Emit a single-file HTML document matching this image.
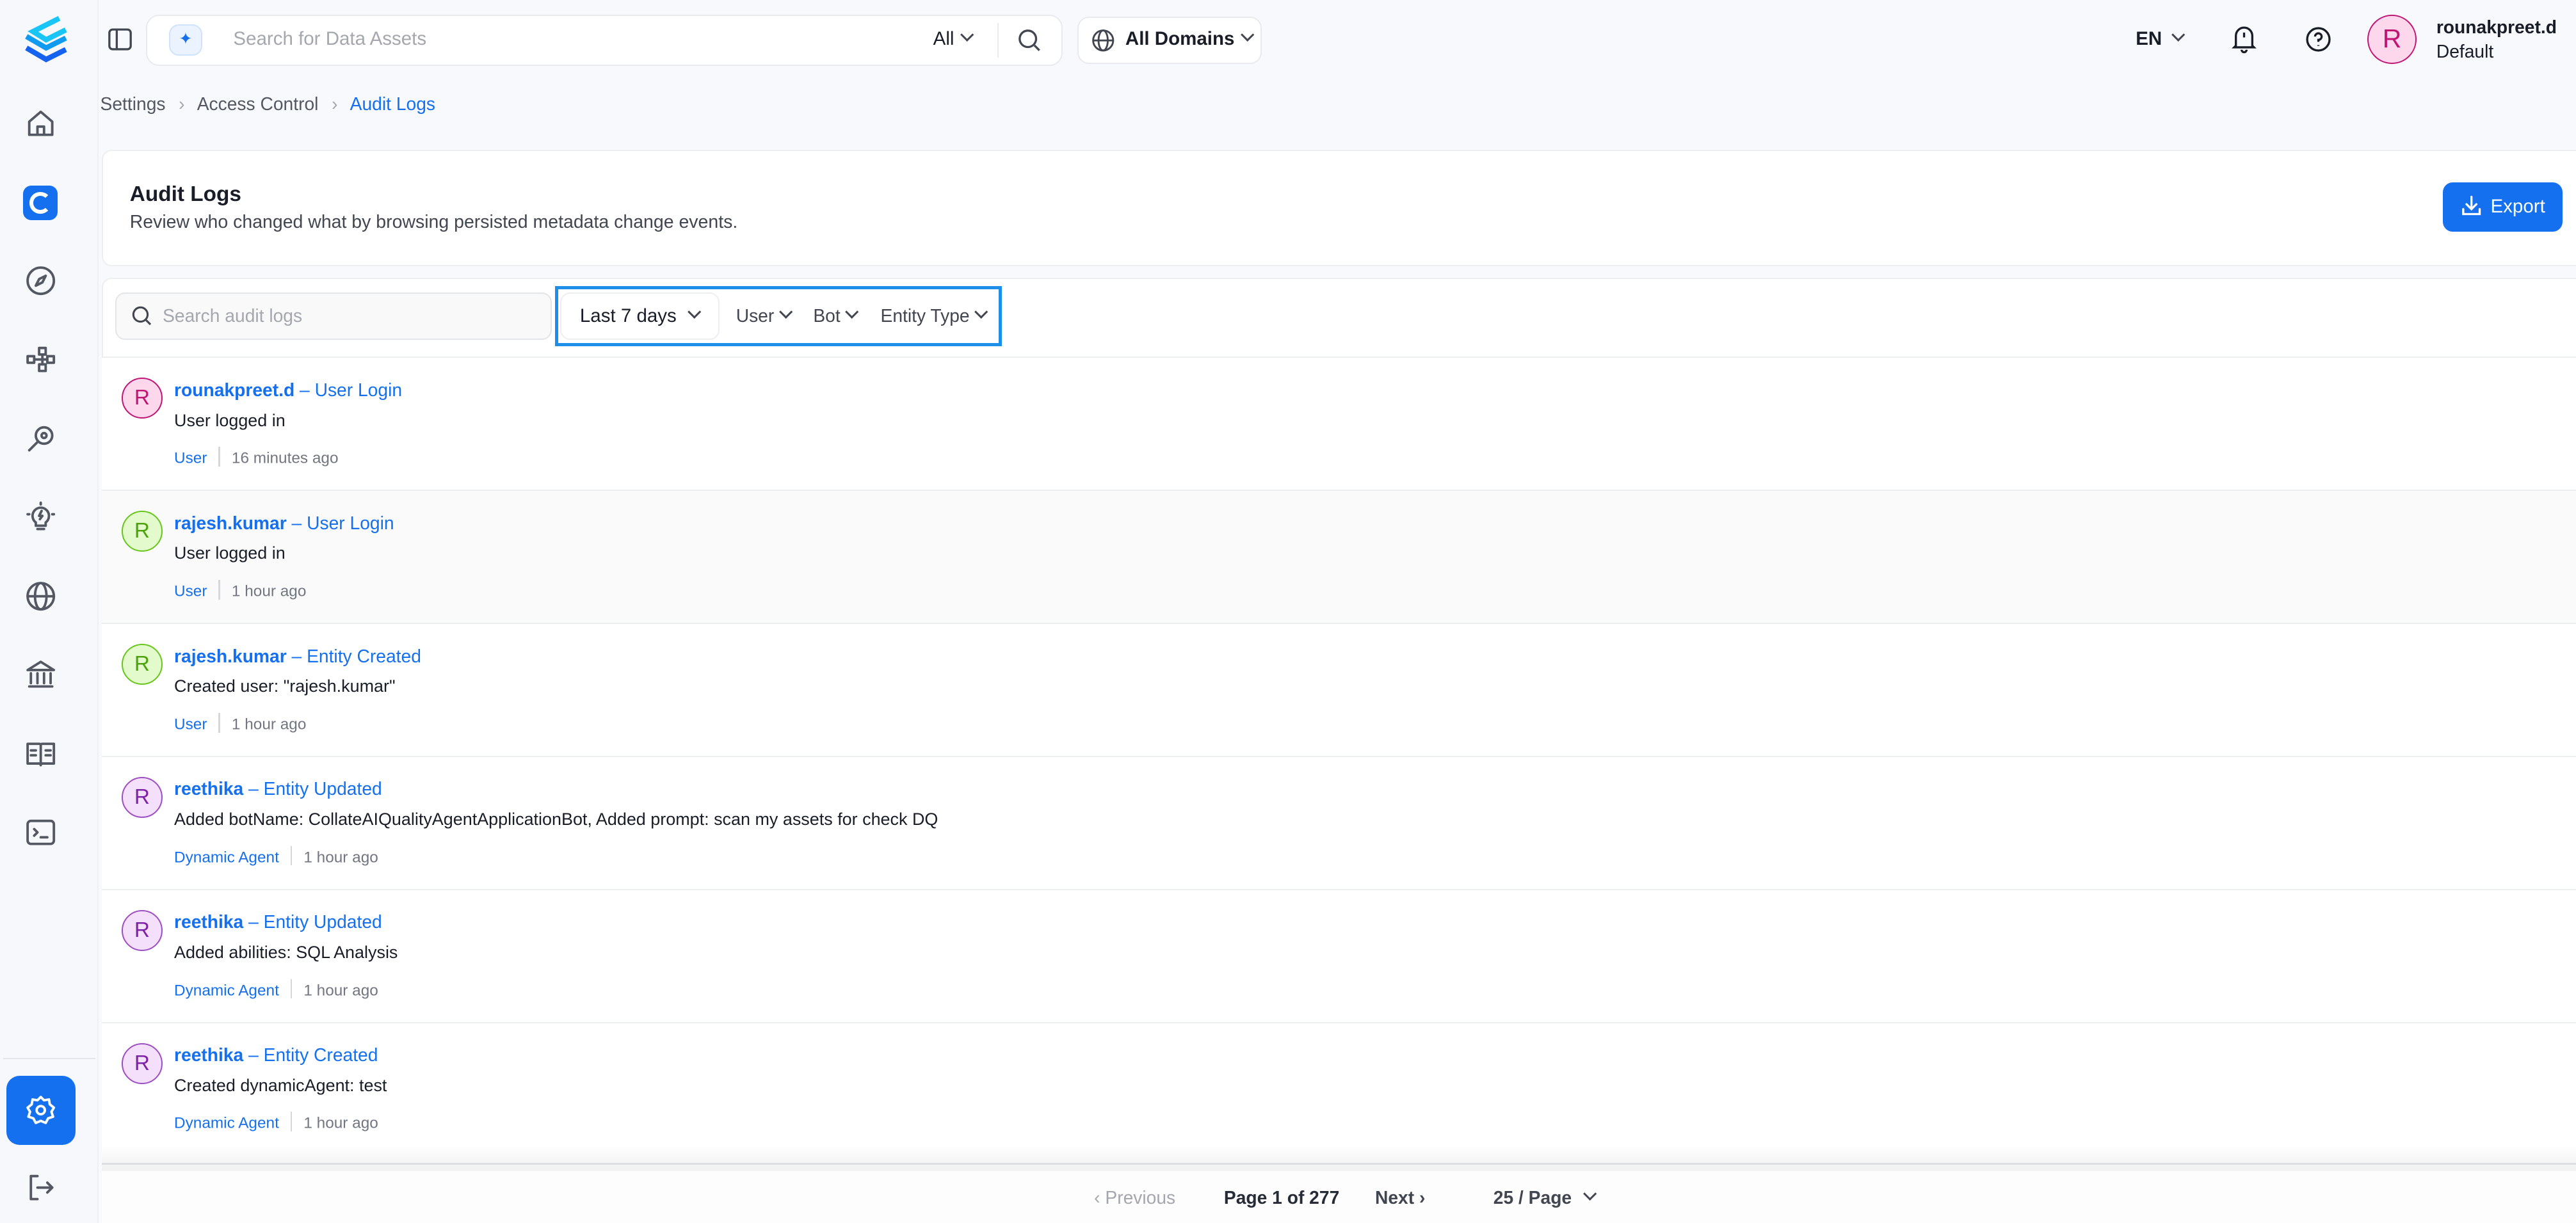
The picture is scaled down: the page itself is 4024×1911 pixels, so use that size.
<!DOCTYPE html>
<html><head><meta charset="utf-8"><style>
*{box-sizing:border-box;margin:0;padding:0}
html,body{width:4024px;height:1911px;overflow:hidden;background:#f8f9fc}
#w{zoom:2.5663;width:1568px;height:745px;position:relative;font-family:"Liberation Sans",sans-serif;color:#181d27;background:#f8f9fc;overflow:hidden}
.a{position:absolute}
.ic{position:absolute;left:15px;width:20px;height:20px;fill:none;stroke:#535862;stroke-width:1.5;stroke-linecap:round;stroke-linejoin:round}
.row{position:absolute;left:62px;width:1506px;height:81px;border-bottom:1px solid #eceef1;background:#fff}
.av{position:absolute;left:12px;top:12px;width:25px;height:25px;border-radius:50%;font-size:13px;text-align:center;line-height:23px}
.t{position:absolute;left:44px;top:13px;font-size:11px;color:#1570ef;font-weight:bold}
.t span{font-weight:normal}
.d{position:absolute;left:44px;top:32px;font-size:10.5px;color:#181d27}
.m{position:absolute;left:44px;top:54px;font-size:9.5px;color:#717680;white-space:nowrap}
.m b{font-weight:normal;color:#1570ef}
.m i{display:inline-block;width:1px;height:12px;background:#d5d7da;margin:0 7px;vertical-align:-2px}
.chev{display:inline-block;width:6px;height:6px;border-right:1.3px solid #414651;border-bottom:1.3px solid #414651;transform:rotate(45deg);margin-left:5px;vertical-align:3px}
</style></head><body><div id="w">
<div class="a" style="left:0;top:0;width:60px;height:745px;background:#f7f8fc;border-right:1px solid #eef0f4"></div>
<svg class="a" style="left:12px;top:8px" width="32" height="34" viewBox="0 0 32 34"><path d="M24 3 L8 11 L16 16 L28 10" fill="none" stroke="#18c5f5" stroke-width="3.2"/><path d="M4 14 L16 21 L28 15" fill="none" stroke="#119bf0" stroke-width="3.2"/><path d="M4 21 L16 28 L28 22" fill="none" stroke="#1562f0" stroke-width="3.2"/></svg>
<svg class="ic" style="top:65px" viewBox="0 0 20 20"><path d="M3 9 L10 3 L17 9 V17 H3 Z"/><path d="M8 17 V12 H12 V17"/></svg>
<div class="a" style="left:14px;top:113px;width:21px;height:21px;border-radius:5px;background:#1570ef"><div class="a" style="left:4px;top:4px;width:13px;height:13px;border:2.4px solid #fff;border-right-color:transparent;border-radius:50%"></div></div>
<svg class="ic" style="top:161px" viewBox="0 0 20 20"><circle cx="10" cy="10" r="8"/><path d="M13 7 L9 9 L7 13 L11 11 Z"/></svg>
<svg class="ic" style="top:209px" viewBox="0 0 20 20"><rect x="2" y="8" width="4" height="4"/><rect x="9" y="3" width="4" height="4"/><rect x="9" y="13" width="4" height="4"/><rect x="14" y="8" width="4" height="4"/><path d="M6 10 H14 M11 7 V13"/></svg>
<svg class="ic" style="top:257px" viewBox="0 0 20 20"><circle cx="12" cy="8" r="5"/><circle cx="12" cy="8" r="1.5"/><path d="M8 12 L3 17"/></svg>
<svg class="ic" style="top:305px" viewBox="0 0 20 20"><path d="M7 13 A5 5 0 1 1 13 13 V15 H7 Z M8 17 H12 M10 1 V2 M3 8 H2 M18 8 H17 M10.5 6 L9 9 H11 L9.5 11"/></svg>
<svg class="ic" style="top:353px" viewBox="0 0 20 20"><circle cx="10" cy="10" r="8"/><ellipse cx="10" cy="10" rx="3.5" ry="8"/><path d="M2 10 H18"/></svg>
<svg class="ic" style="top:401px" viewBox="0 0 20 20"><path d="M2 7 L10 2 L18 7 Z M3 17 H17 M4 9 V15 M8 9 V15 M12 9 V15 M16 9 V15"/></svg>
<svg class="ic" style="top:449px" viewBox="0 0 20 20"><path d="M2 4 H9 Q10 4 10 5 V17 Q10 16 9 16 H2 Z M18 4 H11 Q10 4 10 5 M18 4 V16 H11 Q10 16 10 17 M4 8 H7 M4 11 H7 M13 8 H16 M13 11 H16"/></svg>
<svg class="ic" style="top:497px" viewBox="0 0 20 20"><rect x="2" y="3" width="16" height="14" rx="2"/><path d="M6 8 L8 10 L6 12 M10 13 H14"/></svg>
<div class="a" style="left:2px;top:644px;width:56px;height:1px;background:#e3e5ea"></div>
<div class="a" style="left:4px;top:655px;width:42px;height:42px;border-radius:8px;background:#1570ef"></div>
<svg class="ic" style="top:666px;stroke:#fff" viewBox="0 0 20 20"><circle cx="10" cy="10" r="2.5"/><path d="M10 2 L12 4 L15 3.5 L15.5 6.5 L18 8.5 L16.5 11 L17.5 14 L14.5 15 L13 17.8 L10 16.5 L7 17.8 L5.5 15 L2.5 14 L3.5 11 L2 8.5 L4.5 6.5 L5 3.5 L8 4 Z"/></svg>
<svg class="ic" style="top:713px" viewBox="0 0 20 20"><path d="M8 3 H4 V17 H8 M8 10 H17 M14 7 L17 10 L14 13"/></svg>
<svg class="a" style="left:65px;top:16px" width="16" height="16" viewBox="0 0 16 16" fill="none" stroke="#414651" stroke-width="1.3"><rect x="1.5" y="2" width="13" height="12" rx="2"/><path d="M6 2 V14"/></svg>
<div class="a" style="left:89px;top:9px;width:558px;height:31px;background:#fff;border:1px solid #e9eaf0;border-radius:8px"></div>
<div class="a" style="left:103px;top:15px;width:20px;height:19px;border-radius:6px;background:#eaf3ff;border:1px solid #cfe3fd;color:#1570ef;font-size:10px;text-align:center;line-height:17px">✦</div>
<div class="a" style="left:142px;top:17px;font-size:11.5px;color:#a4a7ae">Search for Data Assets</div>
<div class="a" style="left:568px;top:17px;font-size:11.5px;color:#181d27">All<span class="chev"></span></div>
<div class="a" style="left:607px;top:14px;width:1px;height:21px;background:#e9eaeb"></div>
<svg class="a" style="left:619px;top:17px" width="15" height="15" viewBox="0 0 15 15" fill="none" stroke="#414651" stroke-width="1.3"><circle cx="6.5" cy="6.5" r="5"/><path d="M10.5 10.5 L13.5 13.5"/></svg>
<div class="a" style="left:656px;top:10px;width:112px;height:29px;background:#fff;border:1px solid #e9eaf0;border-radius:7px"></div>
<svg class="a" style="left:664px;top:17px" width="15" height="15" viewBox="0 0 16 16" fill="none" stroke="#414651" stroke-width="1.2"><circle cx="8" cy="8" r="6.5"/><ellipse cx="8" cy="8" rx="3" ry="6.5"/><path d="M1.5 8 H14.5"/></svg>
<div class="a" style="left:685px;top:17px;font-size:11.5px;font-weight:bold;color:#181d27">All Domains<span class="chev"></span></div>
<div class="a" style="left:1300px;top:17px;font-size:11.5px;font-weight:bold;color:#181d27">EN<span class="chev" style="margin-left:7px"></span></div>
<svg class="a" style="left:1358px;top:15px" width="16" height="18" viewBox="0 0 16 18" fill="none" stroke="#181d27" stroke-width="1.3"><path d="M3 13 V7 A5 5 0 0 1 13 7 V13 L14 14 H2 Z M6.5 15.5 A1.5 1.5 0 0 0 9.5 15.5 M8 5 V8"/></svg>
<svg class="a" style="left:1403px;top:16px" width="16" height="16" viewBox="0 0 16 16" fill="none" stroke="#181d27" stroke-width="1.3"><circle cx="8" cy="8" r="6.8"/><path d="M6 6.3 A2 2 0 1 1 8 8.3 V9.5 M8 11.5 V12"/></svg>
<div class="a" style="left:1441px;top:9px;width:30px;height:30px;border-radius:50%;background:#fdd7ec;border:1px solid #c11574;color:#c11574;font-size:16px;text-align:center;line-height:28px">R</div>
<div class="a" style="left:1483px;top:10px;font-size:11px;font-weight:bold;color:#181d27">rounakpreet.d</div>
<div class="a" style="left:1483px;top:25px;font-size:11px;color:#181d27">Default</div>
<div class="a" style="left:61px;top:57px;font-size:11px;color:#535862;white-space:nowrap">Settings <span style="margin:0 5px;color:#a4a7ae">›</span> Access Control <span style="margin:0 5px;color:#a4a7ae">›</span> <span style="color:#1570ef">Audit Logs</span></div>
<div class="a" style="left:62px;top:91px;width:1520px;height:71px;background:#fff;border:1px solid #eceef1;border-radius:6px"></div>
<div class="a" style="left:79px;top:111px;font-size:13px;font-weight:bold;color:#181d27">Audit Logs</div>
<div class="a" style="left:79px;top:129px;font-size:11.1px;color:#414651">Review who changed what by browsing persisted metadata change events.</div>
<div class="a" style="left:1487px;top:111px;width:73px;height:30px;background:#1570ef;border-radius:6px;color:#fff;font-size:11.5px;line-height:30px;padding-left:29px">Export</div>
<svg class="a" style="left:1498px;top:119px" width="13" height="13" viewBox="0 0 13 13" fill="none" stroke="#fff" stroke-width="1.3" stroke-linecap="round"><path d="M6.5 1 V8 M3.5 5.5 L6.5 8.5 L9.5 5.5 M1.5 8.5 V11.5 H11.5 V8.5"/></svg>
<div class="a" style="left:62px;top:169px;width:1520px;height:600px;background:#fff;border:1px solid #eceef1;border-radius:6px"></div>
<div class="a" style="left:70px;top:178px;width:266px;height:29px;background:#f9f9fa;border:1px solid #e3e5ea;border-radius:6px"></div>
<svg class="a" style="left:80px;top:186px" width="13" height="13" viewBox="0 0 15 15" fill="none" stroke="#414651" stroke-width="1.4"><circle cx="6.5" cy="6.5" r="5"/><path d="M10.5 10.5 L13.5 13.5"/></svg>
<div class="a" style="left:99px;top:186px;font-size:11px;color:#a4a7ae">Search audit logs</div>
<div class="a" style="left:338px;top:174px;width:272px;height:37px;border:2px solid #1e8fe9"></div>
<div class="a" style="left:341px;top:178px;width:97px;height:29px;border:1px solid #eceef1;border-radius:6px;background:#fff"></div>
<div class="a" style="left:353px;top:186px;font-size:11.5px;color:#181d27">Last 7 days<span class="chev" style="margin-left:8px"></span></div>
<div class="a" style="left:448px;top:186px;font-size:11px;color:#414651">User<span class="chev" style="margin-left:4px"></span></div>
<div class="a" style="left:495px;top:186px;font-size:11px;color:#414651">Bot<span class="chev" style="margin-left:4px"></span></div>
<div class="a" style="left:536px;top:186px;font-size:11px;color:#414651">Entity Type<span class="chev" style="margin-left:4px"></span></div>
<div class="a" style="left:62px;top:217px;width:1506px;height:1px;background:#eceef1"></div>

<div class="row" style="top:218px"><div class="av" style="background:#fdd7ec;border:1px solid #c11574;color:#c11574">R</div><div class="t">rounakpreet.d <span>– User Login</span></div><div class="d">User logged in</div><div class="m"><b>User</b><i></i>16 minutes ago</div></div>
<div class="row" style="top:299px;background:#fafafa"><div class="av" style="background:#e3fbcc;border:1px solid #66c61c;color:#4ca30d">R</div><div class="t">rajesh.kumar <span>– User Login</span></div><div class="d">User logged in</div><div class="m"><b>User</b><i></i>1 hour ago</div></div>
<div class="row" style="top:380px"><div class="av" style="background:#e3fbcc;border:1px solid #66c61c;color:#4ca30d">R</div><div class="t">rajesh.kumar <span>– Entity Created</span></div><div class="d">Created user: "rajesh.kumar"</div><div class="m"><b>User</b><i></i>1 hour ago</div></div>
<div class="row" style="top:461px"><div class="av" style="background:#f4e0fb;border:1px solid #9e4ec4;color:#7e22a8">R</div><div class="t">reethika <span>– Entity Updated</span></div><div class="d">Added botName: CollateAIQualityAgentApplicationBot, Added prompt: scan my assets for check DQ</div><div class="m"><b>Dynamic Agent</b><i></i>1 hour ago</div></div>
<div class="row" style="top:542px"><div class="av" style="background:#f4e0fb;border:1px solid #9e4ec4;color:#7e22a8">R</div><div class="t">reethika <span>– Entity Updated</span></div><div class="d">Added abilities: SQL Analysis</div><div class="m"><b>Dynamic Agent</b><i></i>1 hour ago</div></div>
<div class="row" style="top:623px;border:none"><div class="av" style="background:#f4e0fb;border:1px solid #9e4ec4;color:#7e22a8">R</div><div class="t">reethika <span>– Entity Created</span></div><div class="d">Created dynamicAgent: test</div><div class="m"><b>Dynamic Agent</b><i></i>1 hour ago</div></div>
<div class="a" style="left:62px;top:697px;width:1506px;height:12px;background:linear-gradient(#fff,#f4f4f5)"></div>
<div class="a" style="left:62px;top:708px;width:1506px;height:1px;background:#dedfe2"></div>
<div class="a" style="left:62px;top:709px;width:1506px;height:4px;background:#f2f2f3"></div>
<div class="a" style="left:62px;top:713px;width:1506px;height:32px;background:#fdfdfe"></div>
<div class="a" style="left:666px;top:723px;font-size:11px;color:#a4a7ae">‹ Previous</div>
<div class="a" style="left:745px;top:723px;font-size:11px;color:#252b37;font-weight:bold">Page 1 of 277</div>
<div class="a" style="left:837px;top:723px;font-size:11px;color:#414651;font-weight:bold">Next ›</div>
<div class="a" style="left:909px;top:723px;font-size:11px;color:#414651;font-weight:bold">25 / Page<span class="chev" style="margin-left:8px"></span></div>
</div></body></html>
